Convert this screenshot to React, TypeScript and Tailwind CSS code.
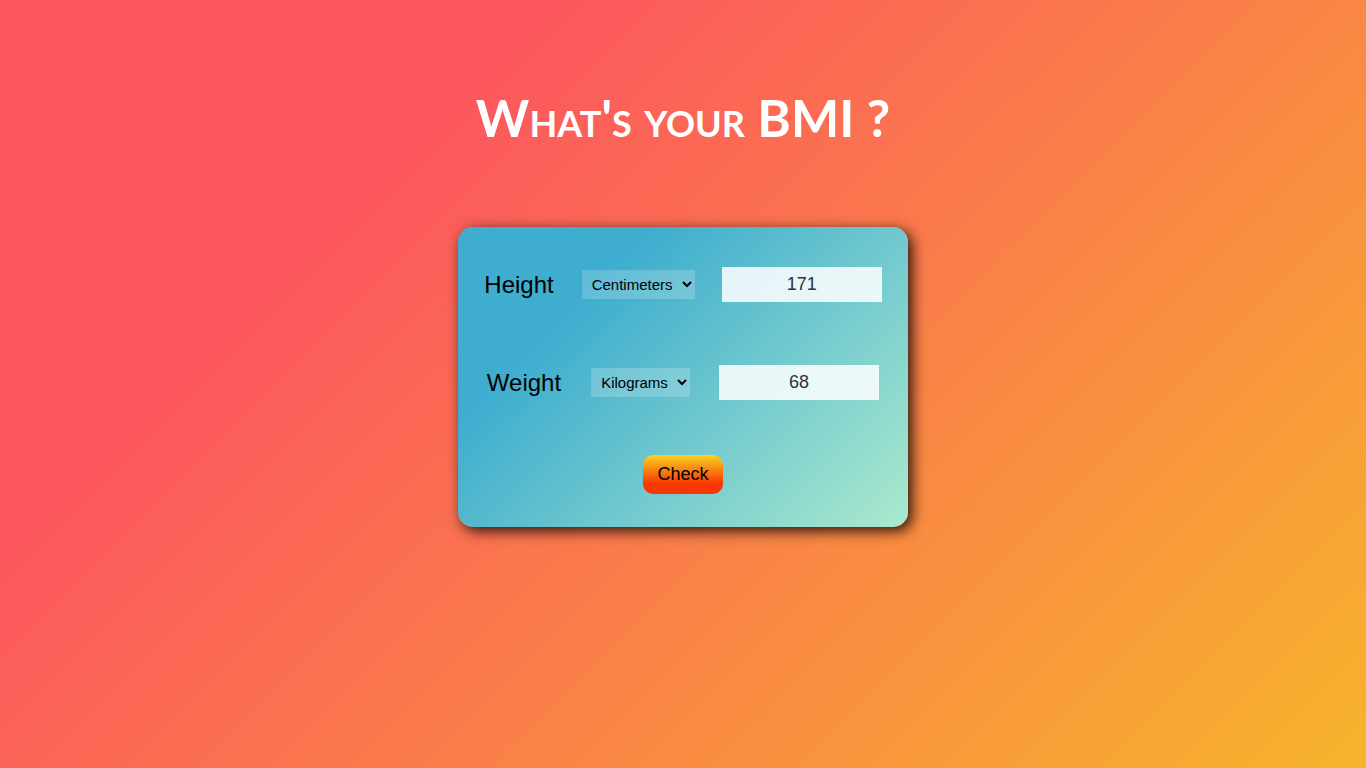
import React from "react";

export default function App() {
  return (
    <div className="min-h-screen w-full flex flex-col items-center bg-[linear-gradient(315deg,#f7b42c_0%,#fc575e_74%)] font-['Liberation_Sans',Arial,sans-serif]">
      <h1 className="mt-[88px] text-white text-[51px] leading-[60px] font-bold [font-variant:small-caps] font-['Lato',sans-serif]">
        What's your BMI ?
      </h1>
      <div className="mt-[79px] w-[450px] h-[300px] rounded-[15px] bg-[linear-gradient(315deg,#abe9cd_0%,#3eadcf_74%)] shadow-[4px_4px_14px_rgba(0,0,0,0.85)] flex flex-col items-center pt-[40px]">
        <div className="flex items-center justify-center h-[35px]">
          <span className="text-[24px] text-black mr-[28px]">Height</span>
          <select
            defaultValue="cm"
            className="w-[113px] h-[29px] bg-white/20 text-[15px] text-black border-none outline-none pl-[6px]"
          >
            <option value="cm">Centimeters</option>
            <option value="m">Meters</option>
            <option value="ft">Feet</option>
          </select>
          <input
            defaultValue="171"
            className="ml-[27px] w-[160px] h-[35px] bg-white/85 text-center text-[18px] text-[#2a3440] border-none outline-none"
          />
        </div>
        <div className="flex items-center justify-center h-[35px] mt-[63px]">
          <span className="text-[24px] text-black mr-[30px]">Weight</span>
          <select
            defaultValue="kg"
            className="w-[99px] h-[29px] bg-white/20 text-[15px] text-black border-none outline-none pl-[6px]"
          >
            <option value="kg">Kilograms</option>
            <option value="lb">Pounds</option>
          </select>
          <input
            defaultValue="68"
            className="ml-[29px] w-[160px] h-[35px] bg-white/85 text-center text-[18px] text-[#2a3440] border-none outline-none"
          />
        </div>
        <button className="mt-[55px] w-[80px] h-[39px] rounded-[10px] bg-[linear-gradient(to_bottom,#f9d423_0%,#f83600_74%)] text-[18px] text-black">
          Check
        </button>
      </div>
    </div>
  );
}
